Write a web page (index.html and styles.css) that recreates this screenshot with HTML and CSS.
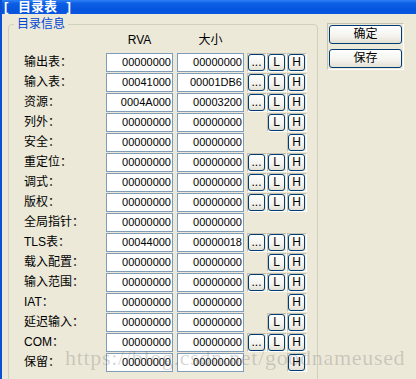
FILE: index.html
```html
<!DOCTYPE html>
<html lang="zh-CN">
<head>
  <meta charset="UTF-8">
  <title>目录表</title>
  <link rel="stylesheet" href="styles.css">
</head>
<body>
<div class="window">
  <div class="titlebar">[ 目录表 ]</div>

  <div class="client">
    <fieldset class="group">
      <legend>目录信息</legend>

      <div class="head">
        <span class="label"></span>
        <span class="col">RVA</span>
        <span class="col">大小</span>
      </div>

      <div class="row">
        <span class="label">输出表：</span>
        <span class="field">00000000</span>
        <span class="field">00000000</span>
        <span class="cells">
          <span class="cell"><button class="btn">...</button></span>
          <span class="cell"><button class="btn">L</button></span>
          <span class="cell"><button class="btn">H</button></span>
        </span>
      </div>
      <div class="row">
        <span class="label">输入表：</span>
        <span class="field">00041000</span>
        <span class="field">00001DB6</span>
        <span class="cells">
          <span class="cell"><button class="btn">...</button></span>
          <span class="cell"><button class="btn">L</button></span>
          <span class="cell"><button class="btn">H</button></span>
        </span>
      </div>
      <div class="row">
        <span class="label">资源：</span>
        <span class="field">0004A000</span>
        <span class="field">00003200</span>
        <span class="cells">
          <span class="cell"><button class="btn">...</button></span>
          <span class="cell"><button class="btn">L</button></span>
          <span class="cell"><button class="btn">H</button></span>
        </span>
      </div>
      <div class="row">
        <span class="label">列外：</span>
        <span class="field">00000000</span>
        <span class="field">00000000</span>
        <span class="cells">
          <span class="slot"></span>
          <span class="cell"><button class="btn">L</button></span>
          <span class="cell"><button class="btn">H</button></span>
        </span>
      </div>
      <div class="row">
        <span class="label">安全：</span>
        <span class="field">00000000</span>
        <span class="field">00000000</span>
        <span class="cells">
          <span class="slot"></span>
          <span class="slot"></span>
          <span class="cell"><button class="btn">H</button></span>
        </span>
      </div>
      <div class="row">
        <span class="label">重定位：</span>
        <span class="field">00000000</span>
        <span class="field">00000000</span>
        <span class="cells">
          <span class="cell"><button class="btn">...</button></span>
          <span class="cell"><button class="btn">L</button></span>
          <span class="cell"><button class="btn">H</button></span>
        </span>
      </div>
      <div class="row">
        <span class="label">调式：</span>
        <span class="field">00000000</span>
        <span class="field">00000000</span>
        <span class="cells">
          <span class="cell"><button class="btn">...</button></span>
          <span class="cell"><button class="btn">L</button></span>
          <span class="cell"><button class="btn">H</button></span>
        </span>
      </div>
      <div class="row">
        <span class="label">版权：</span>
        <span class="field">00000000</span>
        <span class="field">00000000</span>
        <span class="cells">
          <span class="cell"><button class="btn">...</button></span>
          <span class="cell"><button class="btn">L</button></span>
          <span class="cell"><button class="btn">H</button></span>
        </span>
      </div>
      <div class="row">
        <span class="label">全局指针：</span>
        <span class="field">00000000</span>
        <span class="field">00000000</span>
      </div>
      <div class="row">
        <span class="label">TLS表：</span>
        <span class="field">00044000</span>
        <span class="field">00000018</span>
        <span class="cells">
          <span class="cell"><button class="btn">...</button></span>
          <span class="cell"><button class="btn">L</button></span>
          <span class="cell"><button class="btn">H</button></span>
        </span>
      </div>
      <div class="row">
        <span class="label">载入配置：</span>
        <span class="field">00000000</span>
        <span class="field">00000000</span>
        <span class="cells">
          <span class="slot"></span>
          <span class="cell"><button class="btn">L</button></span>
          <span class="cell"><button class="btn">H</button></span>
        </span>
      </div>
      <div class="row">
        <span class="label">输入范围：</span>
        <span class="field">00000000</span>
        <span class="field">00000000</span>
        <span class="cells">
          <span class="cell"><button class="btn">...</button></span>
          <span class="cell"><button class="btn">L</button></span>
          <span class="cell"><button class="btn">H</button></span>
        </span>
      </div>
      <div class="row">
        <span class="label">IAT：</span>
        <span class="field">00000000</span>
        <span class="field">00000000</span>
        <span class="cells">
          <span class="slot"></span>
          <span class="slot"></span>
          <span class="cell"><button class="btn">H</button></span>
        </span>
      </div>
      <div class="row">
        <span class="label">延迟输入：</span>
        <span class="field">00000000</span>
        <span class="field">00000000</span>
        <span class="cells">
          <span class="slot"></span>
          <span class="cell"><button class="btn">L</button></span>
          <span class="cell"><button class="btn">H</button></span>
        </span>
      </div>
      <div class="row">
        <span class="label">COM：</span>
        <span class="field">00000000</span>
        <span class="field">00000000</span>
        <span class="cells">
          <span class="cell"><button class="btn">...</button></span>
          <span class="cell"><button class="btn">L</button></span>
          <span class="cell"><button class="btn">H</button></span>
        </span>
      </div>
      <div class="row">
        <span class="label">保留：</span>
        <span class="field">00000000</span>
        <span class="field">00000000</span>
        <span class="cells">
          <span class="slot"></span>
          <span class="slot"></span>
          <span class="cell"><button class="btn">H</button></span>
        </span>
      </div>
    </fieldset>

    <div class="side">
      <button class="btn wide">确定</button>
      <button class="btn wide">保存</button>
    </div>
  </div>

  <div class="watermark">https://blog.csdn.net/goodnameused</div>
</div>
</body>
</html>
```

FILE: styles.css
```css
body {
  margin: 0;
  background: #ece9d8;
  font-family: "Liberation Sans", "Noto Sans CJK SC", sans-serif;
  font-size: 12px;
  color: #000;
}
.window {
  position: relative;
  width: 416px;
  height: 379px;
  box-sizing: border-box;
  overflow: hidden;
  background: #ece9d8;
  border-left: 2px solid #0a4fd6;
}
.titlebar {
  height: 14px;
  line-height: 14px;
  padding-left: 2px;
  white-space: pre;
  word-spacing: 6px;
  color: #fff;
  font-weight: bold;
  font-size: 13px;
  background: linear-gradient(to bottom, #2f80f5 0%, #0d5fe6 25%, #0554dd 70%, #0a57e0 100%);
}
.client {
  display: flex;
  align-items: flex-start;
  gap: 9px;
  padding: 3px 0 0 6px;
}
.group {
  margin: 0;
  width: 310px;
  box-sizing: border-box;
  border: 1px solid #d0d0bf;
  border-radius: 4px;
  padding: 2px 0 12px 15px;
}
.group legend {
  margin-left: -10px;
  padding: 0 3px;
  line-height: 14px;
  color: #0046d5;
}
.head {
  display: flex;
  height: 14px;
  line-height: 14px;
  margin-bottom: 6px;
}
.head .col { width: 67px; text-align: center; }
.head .col + .col { margin-left: 4px; }
.row {
  display: flex;
  align-items: flex-start;
  height: 20px;
}
.label {
  width: 82px;
  line-height: 19px;
  white-space: nowrap;
}
.field {
  width: 67px;
  height: 19px;
  box-sizing: border-box;
  border: 1px solid #7f9db9;
  background: #fff;
  padding-right: 1px;
  text-align: right;
  font-size: 11px;
  line-height: 17px;
}
.field + .field { margin-left: 4px; }
.cells { display: flex; margin-left: 3px; }
.cell, .slot {
  width: 20px;
  height: 19px;
  box-sizing: border-box;
}
.cell {
  border: 1px solid;
  border-color: #c5c2b2 #fff #fff #c5c2b2;
}
.btn {
  display: block;
  width: 17px;
  height: 17px;
  margin: 0;
  padding: 0;
  border: 1px solid #003c74;
  border-radius: 3px;
  background: linear-gradient(to bottom, #fff 0%, #f4f3ee 60%, #e3e0d4 100%);
  font-family: "Liberation Sans", "Noto Sans CJK SC", sans-serif;
  font-size: 12px;
  line-height: 15px;
  color: #000;
  text-align: center;
}
.side {
  display: flex;
  flex-direction: column;
  gap: 5px;
  margin-top: 6px;
  padding: 1px;
  border: 1px solid;
  border-color: #c5c2b2 #fff #fff #c5c2b2;
}
.btn.wide {
  width: 73px;
  height: 19px;
  line-height: 17px;
}
.watermark {
  position: absolute;
  left: 63px;
  top: 346px;
  font-family: "Liberation Serif", serif;
  font-size: 22px;
  line-height: 24px;
  letter-spacing: 0.7px;
  color: rgba(110, 110, 110, 0.28);
  white-space: nowrap;
  pointer-events: none;
}
```
